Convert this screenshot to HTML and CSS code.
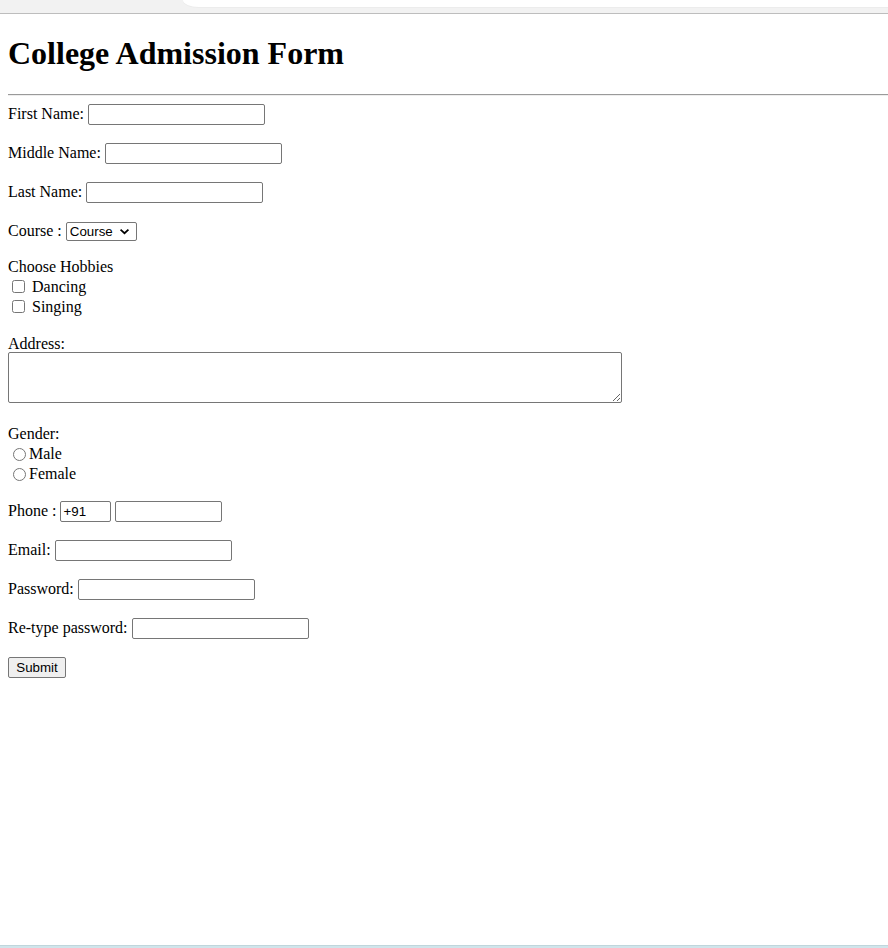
FILE: index.html
```html
<!DOCTYPE html>
<html lang="en">
<head>
<meta charset="utf-8">
<title>College Admission Form</title>
<link rel="stylesheet" href="styles.css">
</head>
<body>
<div class="chrome"><div class="chrome-tab"></div></div>
<main class="page">
  <h1 class="title">College Admission Form</h1>
  <hr class="rule">
  <form class="form">
    <div class="row"><label class="lbl" for="fn">First Name:</label><input id="fn" class="field" type="text"></div>
    <div class="row"><label class="lbl" for="mn">Middle Name:</label><input id="mn" class="field" type="text"></div>
    <div class="row"><label class="lbl" for="ln">Last Name:</label><input id="ln" class="field" type="text"></div>
    <div class="row row-course"><label class="lbl" for="course">Course :</label>
      <select id="course" class="course">
        <option>Course</option>
        <option>BCA</option>
        <option>BBA</option>
        <option>B.Tech</option>
      </select>
    </div>
    <div class="group group-hobbies">
      <div class="line">Choose Hobbies</div>
      <label class="line"><input type="checkbox" class="check">Dancing</label>
      <label class="line"><input type="checkbox" class="check">Singing</label>
    </div>
    <div class="address">
      <label class="addr-label" for="addr">Address:</label>
      <textarea id="addr" class="addr"></textarea>
    </div>
    <div class="group group-gender">
      <div class="line">Gender:</div>
      <label class="line"><input type="radio" name="gender" class="radio">Male</label>
      <label class="line"><input type="radio" name="gender" class="radio">Female</label>
    </div>
    <div class="row"><label class="lbl" for="code">Phone :</label><input id="code" class="field code" type="text" value="+91"><input class="field phone" type="text"></div>
    <div class="row"><label class="lbl" for="em">Email:</label><input id="em" class="field" type="email"></div>
    <div class="row"><label class="lbl" for="pw">Password:</label><input id="pw" class="field" type="password"></div>
    <div class="row"><label class="lbl" for="pw2">Re-type password:</label><input id="pw2" class="field" type="password"></div>
    <div class="row"><button type="button" class="submit">Submit</button></div>
  </form>
</main>
<div class="statusbar"></div>
</body>
</html>
```
FILE: styles.css
```css
html, body {
  margin: 0;
  height: 100%;
}
body {
  display: flex;
  flex-direction: column;
  background: #ffffff;
  color: #000000;
  font-family: "Liberation Serif", "Times New Roman", serif;
  font-size: 16px;
}
.chrome {
  display: flex;
  height: 13px;
  background: #f2f2f2;
  border-bottom: 1px solid #bdbdbd;
  flex: none;
}
.chrome-tab {
  margin-left: 183px;
  flex: 1;
  height: 7px;
  background: #ffffff;
  border-bottom-left-radius: 18px 8px;
  box-shadow: 0 1px 0 #ececec;
}
.page {
  flex: 1;
  padding: 0 0 0 8px;
}
.title {
  margin: 21px 0 22px;
  font-size: 32px;
  line-height: 37px;
  font-weight: bold;
}
.rule {
  margin: 0 0 8px;
  height: 0;
  border: 0;
  border-top: 1px solid #9a9a9a;
  border-bottom: 1px solid #eeeeee;
}
.form {
  margin: 0;
}
.row {
  display: flex;
  align-items: center;
  gap: 4px;
  height: 21px;
  margin-bottom: 18px;
}
.lbl {
  padding-bottom: 2px;
}
.row-course {
  margin-bottom: 15px;
}
.field {
  box-sizing: border-box;
  width: 177px;
  height: 21px;
  margin: 0;
  padding: 1px 2px;
  border: 1px solid #767676;
  border-radius: 2px;
  background: #ffffff;
  font-family: "Liberation Sans", Arial, sans-serif;
  font-size: 13.333px;
  color: #000000;
}
.code {
  width: 51px;
}
.phone {
  width: 107px;
}
.course {
  box-sizing: border-box;
  height: 19px;
  width: 71px;
  margin: 0;
  padding: 0 0 0 3px;
  -webkit-appearance: none;
  appearance: none;
  font-family: "Liberation Sans", Arial, sans-serif;
  font-size: 13.333px;
  color: #000000;
  border: 1px solid #767676;
  border-radius: 2px;
  background-color: #ffffff;
  background-image: url("data:image/svg+xml,%3Csvg xmlns='http://www.w3.org/2000/svg' width='12' height='8' viewBox='0 0 12 8'%3E%3Cpath d='M1.5 1.8 L6 6 L10.5 1.8' fill='none' stroke='%23000' stroke-width='2'/%3E%3C/svg%3E");
  background-repeat: no-repeat;
  background-position: right 6px center;
  background-size: 11px 7px;
}
.group {
  display: flex;
  flex-direction: column;
}
.group-hobbies {
  margin-bottom: 16px;
}
.group-gender {
  margin-bottom: 17px;
}
.line {
  display: flex;
  align-items: center;
  height: 20px;
}
.check {
  width: 13px;
  height: 13px;
  margin: 0 7px 2px 4px;
}
.radio {
  width: 13px;
  height: 13px;
  margin: 0 3px 0 5px;
}
.address {
  margin-bottom: 21px;
}
.addr-label {
  display: block;
  height: 19px;
  line-height: 21px;
}
.addr {
  display: block;
  box-sizing: border-box;
  width: 614px;
  height: 51px;
  margin: 0;
  padding: 2px;
  border: 1px solid #767676;
  border-radius: 2px;
  font-family: "Liberation Mono", monospace;
  font-size: 13.333px;
}
.submit {
  box-sizing: border-box;
  width: 58px;
  height: 21px;
  margin: 0;
  padding: 1px 6px;
  border: 1px solid #767676;
  border-radius: 2px;
  background: #efefef;
  font-family: "Liberation Sans", Arial, sans-serif;
  font-size: 13.333px;
  color: #000000;
}
.statusbar {
  flex: none;
  height: 2px;
  background: #d0e5eb;
  border-top: 1px solid #c0d6dc;
}
```
